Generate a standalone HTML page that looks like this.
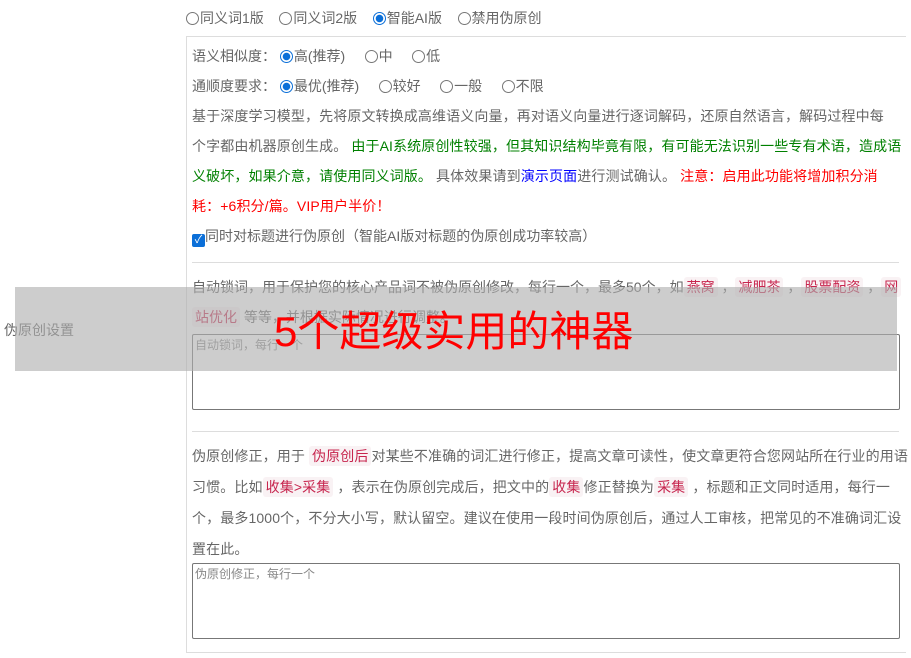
<!DOCTYPE html>
<html><head><meta charset="utf-8"><style>
*{margin:0;padding:0;box-sizing:border-box}
body{width:911px;height:658px;overflow:hidden;background:#fff;font-family:"Liberation Sans","Noto Sans CJK SC",sans-serif;font-size:14px;color:#666;position:relative}
.a{position:absolute;white-space:nowrap;line-height:20px}
.r{display:inline-block;width:13px;height:13px;border:1px solid #777;border-radius:50%;vertical-align:-2px;margin-right:1px;background:#fff}
.r.on{border:1px solid #0b6fd8;background:radial-gradient(circle,#0b6fd8 0 3.5px,#fff 4px)}
code{font-family:inherit;background:#f9f2f4;color:#c7254e;padding:2px 3px;border-radius:3px}
.box{position:absolute;left:186px;top:36px;width:720px;height:617px;border:1px solid #ddd;border-right:none}
.sep{position:absolute;left:192px;width:707px;height:1px;background:#ddd}
.ta{position:absolute;left:192px;width:708px;border:1px solid #777;border-radius:2px;font-size:12px;color:#888;padding:3px 2px;line-height:14px}
.g{color:#008000}.b{color:#00f}.red{color:#f00}
.p{letter-spacing:0.12px}
</style></head><body>
<div class="a" style="left:186px;top:8px"><span class="r"></span>同义词1版&nbsp;&nbsp;&nbsp;&nbsp;<span class="r"></span>同义词2版&nbsp;&nbsp;&nbsp;&nbsp;<span class="r on"></span>智能AI版&nbsp;&nbsp;&nbsp;&nbsp;<span class="r"></span>禁用伪原创</div>
<div class="box"></div>
<div class="a" style="left:192px;top:46px">语义相似度：&nbsp;<span class="r on"></span>高(推荐)&nbsp;&nbsp;&nbsp;&nbsp;&nbsp;<span class="r"></span>中&nbsp;&nbsp;&nbsp;&nbsp;&nbsp;<span class="r"></span>低</div>
<div class="a" style="left:192px;top:76px">通顺度要求：&nbsp;<span class="r on"></span>最优(推荐)&nbsp;&nbsp;&nbsp;&nbsp;&nbsp;<span class="r"></span>较好&nbsp;&nbsp;&nbsp;&nbsp;&nbsp;<span class="r"></span>一般&nbsp;&nbsp;&nbsp;&nbsp;&nbsp;<span class="r"></span>不限</div>
<div class="a p" style="left:192px;top:101px;line-height:30px">基于深度学习模型，先将原文转换成高维语义向量，再对语义向量进行逐词解码，还原自然语言，解码过程中每<br>个字都由机器原创生成。 <span class="g">由于AI系统原创性较强，但其知识结构毕竟有限，有可能无法识别一些专有术语，造成语</span><br><span class="g">义破坏，如果介意，请使用同义词版。</span> 具体效果请到<span class="b">演示页面</span>进行测试确认。 <span class="red">注意：启用此功能将增加积分消</span><br><span class="red">耗：+6积分/篇。VIP用户半价！</span></div>
<div class="a" style="left:192px;top:226px"><span style="display:inline-block;width:13px;height:13px;background:#0b6fd8;border-radius:2px;vertical-align:-2px;color:#fff;font-size:11px;line-height:13px;text-align:center">✓</span>同时对标题进行伪原创（智能AI版对标题的伪原创成功率较高）</div>
<div class="sep" style="top:262px"></div>
<div class="a" style="left:192px;top:272px;line-height:30px">自动锁词，用于保护您的核心产品词不被伪原创修改，每行一个，最多50个，如<code>燕窝</code> ，<code>减肥茶</code> ，<code>股票配资</code> ，<code>网</code><br><code>站优化</code> 等等，并根据实际情况进行调整。</div>
<div class="ta" style="top:334px;height:76px">自动锁词，每行一个</div>
<div class="sep" style="top:431px"></div>
<div class="a p" style="left:192px;top:441px;line-height:31px">伪原创修正，用于 <code>伪原创后</code>对某些不准确的词汇进行修正，提高文章可读性，使文章更符合您网站所在行业的用语<br>习惯。比如<code>收集&gt;采集</code> ，表示在伪原创完成后，把文中的<code>收集</code>修正替换为<code>采集</code> ，标题和正文同时适用，每行一<br>个，最多1000个，不分大小写，默认留空。建议在使用一段时间伪原创后，通过人工审核，把常见的不准确词汇设<br>置在此。</div>
<div class="ta" style="top:563px;height:76px">伪原创修正，每行一个</div>
<div class="a" style="left:4px;top:320px;color:#666">伪原创设置</div>
<div style="position:absolute;left:15px;top:287px;width:882px;height:84px;background:rgba(175,175,175,0.62)"></div>
<div class="a" style="left:274px;top:306px;font-size:42px;line-height:52px;color:#f00">5个超级实用的神器</div>
</body></html>
